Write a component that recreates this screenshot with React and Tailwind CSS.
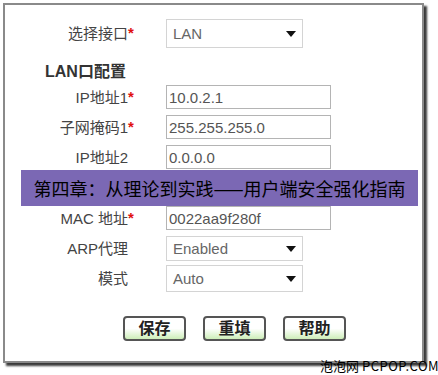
const cjk = { fontFamily: '"Liberation Sans", "Noto Sans CJK SC", sans-serif' };

function Arrow() {
  return (
    <svg width="10" height="6" viewBox="0 0 10 6" className="shrink-0">
      <path d="M0 0 L10 0 L5 6 Z" fill="#111" />
    </svg>
  );
}

function Label({ text, star }) {
  return (
    <div className="flex items-center shrink-0">
      <div className="w-[123px] text-right text-[15px] text-[#444] leading-none whitespace-nowrap">{text}</div>
      <div className="w-[12px] text-[15px] font-bold text-[#e01010] leading-none -mt-[2px]">{star ? '*' : ''}</div>
    </div>
  );
}

function TextRow({ label, star, value, mt }) {
  return (
    <div className={`flex items-center ${mt}`}>
      <Label text={label} star={star} />
      <div className="ml-[26px] w-[165px] h-[24px] border border-[#b4b4b4] flex items-center px-[2px] text-[15px] text-[#555] leading-none">
        {value}
      </div>
    </div>
  );
}

function SelectRow({ label, star, value, mt, h }) {
  return (
    <div className={`flex items-center ${mt}`}>
      <Label text={label} star={star} />
      <div className={`ml-[26px] w-[137px] ${h} border border-[#d4d4d4] flex items-center justify-between pl-[6px] pr-[6px] text-[15px] text-[#666] leading-none`}>
        <span>{value}</span>
        <Arrow />
      </div>
    </div>
  );
}

function Btn({ children }) {
  return (
    <div className="w-[63px] h-[25px] border-2 border-[#555] rounded-[4px] bg-gradient-to-b from-white via-white to-[#cdeeb8] flex items-center justify-center text-[16px] font-bold text-[#222] leading-none">
      {children}
    </div>
  );
}

export default function App() {
  return (
    <div className="relative w-[438px] h-[375px] bg-white overflow-hidden" style={cjk}>
      <div className="ml-[3px] mt-[3px] w-[421px] h-[360px] border-2 border-[#8a8a8a] shadow-[3px_3px_2px_#3a3a3a] flex flex-col">
        <SelectRow label="选择接口" star value="LAN" mt="mt-[14px]" h="h-[29px]" />
        <div className="mt-[14px] ml-[40px] h-[20px] flex items-center text-[16px] font-bold text-[#333] leading-none">
          LAN口配置
        </div>
        <TextRow label="IP地址1" star value="10.0.2.1" mt="mt-[3px]" />
        <TextRow label="子网掩码1" star value="255.255.255.0" mt="mt-[6px]" />
        <TextRow label="IP地址2" value="0.0.0.0" mt="mt-[6px]" />
        <div
          className="mt-[1px] ml-[16px] w-[397px] h-[36px] bg-[#7b68b4] flex items-center justify-center text-[18px] text-black leading-none whitespace-nowrap"
          style={{ fontFamily: '"Noto Sans CJK SC", sans-serif' }}
        >
          第四章：从理论到实践——用户端安全强化指南
        </div>
        <TextRow label="MAC 地址" star value="0022aa9f280f" mt="mt-[0px]" />
        <SelectRow label="ARP代理" value="Enabled" mt="mt-[6px]" h="h-[25px]" />
        <SelectRow label="模式" value="Auto" mt="mt-[4px]" h="h-[27px]" />
        <div className="mt-[24px] ml-[118px] flex gap-[17px]">
          <Btn>保存</Btn>
          <Btn>重填</Btn>
          <Btn>帮助</Btn>
        </div>
      </div>
      <div
        className="absolute left-[320px] top-[359px] text-[13px] text-black leading-none whitespace-nowrap"
        style={{ fontFamily: '"Noto Sans CJK SC", "Liberation Sans", sans-serif' }}
      >
        泡泡网 <span className="tracking-[0.5px]">PCPOP.COM</span>
      </div>
    </div>
  );
}
